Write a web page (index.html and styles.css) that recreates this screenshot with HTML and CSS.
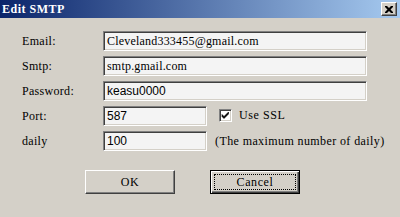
FILE: index.html
```html
<!DOCTYPE html>
<html>
	<head>
		<meta charset="UTF-8">
		<title>Edit SMTP</title>
		<link rel="stylesheet" href="styles.css">
	</head>
	<body>
		<div class="dialog">
			<div class="title-bar">
				<span class="title">Edit SMTP</span>
				<span class="close-btn">
					<svg width="8" height="7" viewBox="0 0 8 7"><path d="M0 0h2l2 2 2-2h2v1l-2.5 2.5 2.5 2.5v1h-2l-2-2-2 2h-2v-1l2.5-2.5-2.5-2.5z" fill="#000"/></svg>
				</span>
			</div>
			<div class="form">
				<label class="label">Email:</label>
				<div class="field">Cleveland333455@gmail.com</div>

				<label class="label">Smtp:</label>
				<div class="field">smtp.gmail.com</div>

				<label class="label">Password:</label>
				<div class="field sans">keasu0000</div>

				<label class="label">Port:</label>
				<div class="row">
					<div class="field short sans">587</div>
					<span class="check">
						<svg width="9" height="9" viewBox="0 0 9 9"><path d="M1 3.5l2 2 4.5-4.5v2l-4.5 4.5-2-2z" fill="#000" stroke="#000" stroke-width="0.6"/></svg>
					</span>
					<span class="check-text">Use SSL</span>
				</div>

				<label class="label">daily</label>
				<div class="row">
					<div class="field short sans">100</div>
					<span class="hint">(The maximum number of daily)</span>
				</div>
			</div>
			<div class="buttons">
				<div class="button">OK</div>
				<div class="button default"><span class="focus">Cancel</span></div>
			</div>
		</div>
	</body>
</html>
```

FILE: styles.css
```css
body {
	margin: 0;
	background-color: #d4d0c8;
	font-family: "Liberation Serif", serif;
	font-size: 12px;
	color: #000;
}

.dialog {
	width: 400px;
	height: 217px;
	overflow: hidden;
}

.title-bar {
	display: flex;
	align-items: center;
	justify-content: space-between;
	height: 18px;
	padding: 0 3px 0 2px;
	background: linear-gradient(to right, #0a246a, #a6caf0);
}

.title {
	color: #fff;
	font-weight: bold;
	letter-spacing: 0.5px;
}

.close-btn {
	display: flex;
	align-items: center;
	justify-content: center;
	width: 14px;
	height: 12px;
	background-color: #d4d0c8;
	border: 1px solid;
	border-color: #fff #404040 #404040 #fff;
	box-shadow: inset -1px -1px #808080;
}

.form {
	display: grid;
	grid-template-columns: 81px 264px;
	grid-auto-rows: 20px;
	row-gap: 5px;
	align-items: center;
	padding: 13px 0 0 22px;
}

.label {
	letter-spacing: 0.3px;
}

.field {
	box-sizing: border-box;
	height: 20px;
	padding: 0 3px;
	line-height: 18px;
	background-color: #f4f4f4;
	border: 1px solid;
	border-color: #808080 #fff #fff #808080;
	box-shadow: inset 1px 1px #404040, inset -1px -1px #d4d0c8;
	white-space: nowrap;
	letter-spacing: 0.2px;
}

.sans {
	font-family: "Liberation Sans", sans-serif;
	letter-spacing: 0;
}

.row {
	display: flex;
	align-items: center;
	height: 20px;
	white-space: nowrap;
}

.short {
	width: 104px;
	flex: none;
}

.check {
	display: flex;
	align-items: center;
	justify-content: center;
	box-sizing: border-box;
	width: 13px;
	height: 13px;
	margin-left: 12px;
	margin-top: -2px;
	background-color: #fff;
	border: 1px solid;
	border-color: #808080 #fff #fff #808080;
	box-shadow: inset 1px 1px #404040, inset -1px -1px #d4d0c8;
}

.check-text {
	margin-left: 7px;
	margin-top: -2px;
	letter-spacing: 0.6px;
}

.hint {
	margin-left: 8px;
	letter-spacing: 0.4px;
}

.buttons {
	display: flex;
	gap: 35px;
	padding: 19px 0 0 85px;
}

.button {
	box-sizing: border-box;
	width: 90px;
	height: 24px;
	display: flex;
	align-items: center;
	justify-content: center;
	border: 1px solid;
	border-color: #fff #404040 #404040 #fff;
	box-shadow: inset -1px -1px #808080;
	letter-spacing: 0.6px;
}

.button.default {
	border: 1px solid #000;
	box-shadow: inset 1px 1px #fff, inset -1px -1px #404040, inset -2px -2px #808080;
}

.focus {
	display: flex;
	align-items: center;
	justify-content: center;
	box-sizing: border-box;
	width: 80px;
	height: 14px;
	outline: 1px dotted #000;
}
```
